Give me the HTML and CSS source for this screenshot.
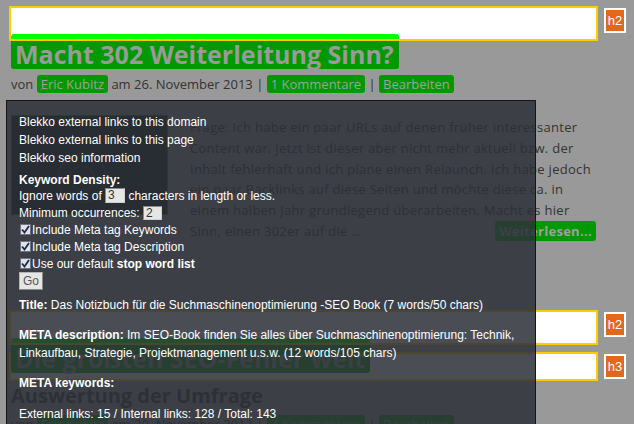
FILE: index.html
```html
<!DOCTYPE html>
<html lang="de">
<head>
<meta charset="utf-8">
<title>Macht 302 Weiterleitung Sinn?</title>
<link rel="stylesheet" href="styles.css">
</head>
<body>
<div class="hl hl-1"></div>
<div class="badge badge-1">h2</div>
<div class="hl hl-2"></div>
<div class="badge badge-2">h2</div>
<div class="hl hl-3"></div>
<div class="badge badge-3">h3</div>

<main class="page">
  <article class="post">
    <h2 class="title"><span class="title-text">Macht 302 Weiterleitung Sinn?</span></h2>
    <div class="meta">von <a class="pill">Eric Kubitz</a> am 26. November 2013 | <a class="pill">1 Kommentare</a> | <a class="pill">Bearbeiten</a></div>
    <div class="entry">
      <div class="thumb">
        <svg width="155" height="98" viewBox="0 0 155 98"><circle cx="70" cy="62" r="24" fill="none" stroke="#34373c" stroke-width="2"/><circle cx="70" cy="62" r="12" fill="none" stroke="#2e3136" stroke-width="2"/></svg>
      </div>
      <div class="excerpt">
        <span class="line">Frage: Ich habe ein paar URLs auf denen früher interessanter</span>
        <span class="line">Content war. Jetzt ist dieser aber nicht mehr aktuell bzw. der</span>
        <span class="line">Inhalt fehlerhaft und ich plane einen Relaunch. Ich habe jedoch</span>
        <span class="line">ein paar Backlinks auf diese Seiten und möchte diese ca. in</span>
        <span class="line">einem halben Jahr grundlegend überarbeiten. Macht es hier</span>
        <span class="line last">Sinn, einen 302er auf die …<a class="more">Weiterlesen...</a></span>
      </div>
    </div>
  </article>
  <article class="post post-2">
    <h2 class="title"><span class="title-text">Die größten SEO-Fehler weit</span></h2>
    <h3 class="subtitle">Auswertung der Umfrage</h3>
    <div class="meta">von <a class="pill">Eric Kubitz</a> am 20. November 2013 | <a class="pill">3 Kommentare</a> | <a class="pill">Bearbeiten</a></div>
  </article>
</main>

<aside class="panel">
  <div class="links">
    <a>Blekko external links to this domain</a>
    <a>Blekko external links to this page</a>
    <a>Blekko seo information</a>
  </div>
  <div class="kd">
    <div class="row row-head"><b>Keyword Density:</b></div>
    <div class="row">Ignore words of <span class="inp inp-3">3</span> characters in length or less.</div>
    <div class="row">Minimum occurrences: <span class="inp inp-2">2</span></div>
    <div class="row"><span class="cb"><svg width="9" height="9" viewBox="0 0 9 9"><path d="M1 4.5 L3.5 7.5 L8 1" fill="none" stroke="#1d2a48" stroke-width="1.8"/></svg></span>Include Meta tag Keywords</div>
    <div class="row"><span class="cb"><svg width="9" height="9" viewBox="0 0 9 9"><path d="M1 4.5 L3.5 7.5 L8 1" fill="none" stroke="#1d2a48" stroke-width="1.8"/></svg></span>Include Meta tag Description</div>
    <div class="row row-short"><span class="cb"><svg width="9" height="9" viewBox="0 0 9 9"><path d="M1 4.5 L3.5 7.5 L8 1" fill="none" stroke="#1d2a48" stroke-width="1.8"/></svg></span>Use our default <b>stop word list</b></div>
    <button class="go">Go</button>
  </div>
  <p class="info info-title"><b>Title:</b> Das Notizbuch für die Suchmaschinenoptimierung -SEO Book (7 words/50 chars)</p>
  <p class="info"><b>META description:</b> Im SEO-Book finden Sie alles über Suchmaschinenoptimierung: Technik, Linkaufbau, Strategie, Projektmanagement u.s.w. (12 words/105 chars)</p>
  <p class="info"><b>META keywords:</b></p>
  <p class="info info-ext">External links: 15 / Internal links: 128 / Total: 143</p>
</aside>
</body>
</html>
```

FILE: styles.css
```css
html, body {
  margin: 0;
  padding: 0;
}
body {
  background: #999999;
  width: 634px;
  height: 424px;
  overflow: hidden;
  position: relative;
  font-family: "Open Sans", "DejaVu Sans", sans-serif;
  color: #333;
}

/* heading highlight boxes (tool overlay, behind content) */
.hl {
  position: absolute;
  left: 9px;
  width: 585px;
  background: #fff;
  border: 2px solid #ffcc00;
  z-index: 0;
}
.hl-1 { top: 6px; height: 31px; }
.hl-2 { top: 310px; height: 31px; }
.hl-3 { top: 352px; height: 25px; }

.badge {
  position: absolute;
  left: 604px;
  width: 18px;
  height: 21px;
  border: 2px solid #fff;
  background: #e0691f;
  color: #fff;
  font: 13px/21px "Liberation Sans", Arial, sans-serif;
  text-align: center;
  z-index: 0;
}
.badge-1 { top: 8px; }
.badge-2 { top: 312px; }
.badge-3 { top: 354px; }

/* page */
.page {
  position: relative;
  z-index: 1;
  padding-left: 11px;
}
.post { margin: 0; }
.title {
  margin: 34px 0 0;
  font-size: 25px;
  font-weight: 700;
  line-height: 30px;
}
.title-text {
  display: inline-block;
  background: #009900;
  color: #9a9a9a;
  border-top: 5px solid #00ff00;
  box-shadow: inset 0 2px 0 #ffcc00;
  border-radius: 3px;
  padding: 0 5px 0 4px;
}
.meta {
  margin-top: 6px;
  font-size: 13px;
  line-height: 18px;
  height: 18px;
}
.pill {
  display: inline-block;
  background: #009900;
  color: #a0a0a0;
  border-radius: 3px;
  padding: 0 4px;
}
.entry {
  display: flex;
  gap: 22px;
  margin-top: 22px;
}
.thumb {
  width: 155px;
  height: 98px;
  background: #141518;
  border: 1px solid #127a27;
}
.thumb svg { display: block; }
.excerpt {
  width: 406px;
  margin-top: 2px;
  font-size: 13px;
  line-height: 20.8px;
  letter-spacing: 0.3px;
}
.line {
  display: block;
  white-space: nowrap;
}
.line.last {
  display: flex;
  align-items: center;
}
.more {
  margin-left: auto;
  background: #009900;
  color: #a0a0a0;
  font-weight: 700;
  border-radius: 3px;
  padding: 0 4px;
  line-height: 20px;
}
.post-2 .title { margin-top: 96px; }
.subtitle {
  margin: 10px 0 0;
  font-size: 20px;
  line-height: 26px;
  font-weight: 700;
  color: #333;
}

/* Overlay panel */
.panel {
  position: absolute;
  z-index: 2;
  left: 6px;
  top: 100px;
  width: 504px;
  height: 340px;
  padding: 12px 12px 0;
  background: rgba(44, 48, 56, 0.86);
  border: 1px solid #151515;
  color: #fff;
  font: 12px/18px "Liberation Sans", Arial, sans-serif;
}
.links a {
  display: block;
  color: #fff;
  line-height: 18px;
}
.kd { margin-top: 5px; }
.row {
  height: 17px;
  line-height: 17px;
  white-space: nowrap;
}
.row-head { height: 16px; line-height: 16px; }
.row-short { height: 16px; line-height: 16px; }
.inp {
  display: inline-block;
  vertical-align: middle;
  box-sizing: border-box;
  background: #e6e6e6;
  border-top: 1px solid #8a8a8a;
  border-left: 1px solid #8a8a8a;
  border-right: 1px solid #d0d0d0;
  border-bottom: 1px solid #d0d0d0;
  color: #333;
  padding-left: 2px;
  text-align: left;
}
.inp-3 { width: 20px; height: 15px; line-height: 13px; margin-top: -2px; }
.inp-2 { width: 19px; height: 14px; line-height: 12px; margin-top: -1px; }
.cb {
  display: inline-block;
  box-sizing: border-box;
  width: 11px;
  height: 11px;
  margin: 0 1px 0 1px;
  vertical-align: -1px;
  background: #dfe2ea;
  border: 1px solid #6f7380;
}
.cb svg { display: block; }
.go {
  display: block;
  box-sizing: border-box;
  width: 24px;
  height: 18px;
  padding: 0;
  margin: 0;
  background: #e6e6e6;
  border: 1px solid #b5b5b5;
  border-right-color: #8a8a8a;
  border-bottom-color: #8a8a8a;
  color: #555;
  font: 12px/16px "Liberation Sans", Arial, sans-serif;
}
.info {
  margin: 12px 0 0;
  line-height: 18px;
}
.info-title { margin-top: 6px; }
.info-ext { margin-top: 13px; }
```
